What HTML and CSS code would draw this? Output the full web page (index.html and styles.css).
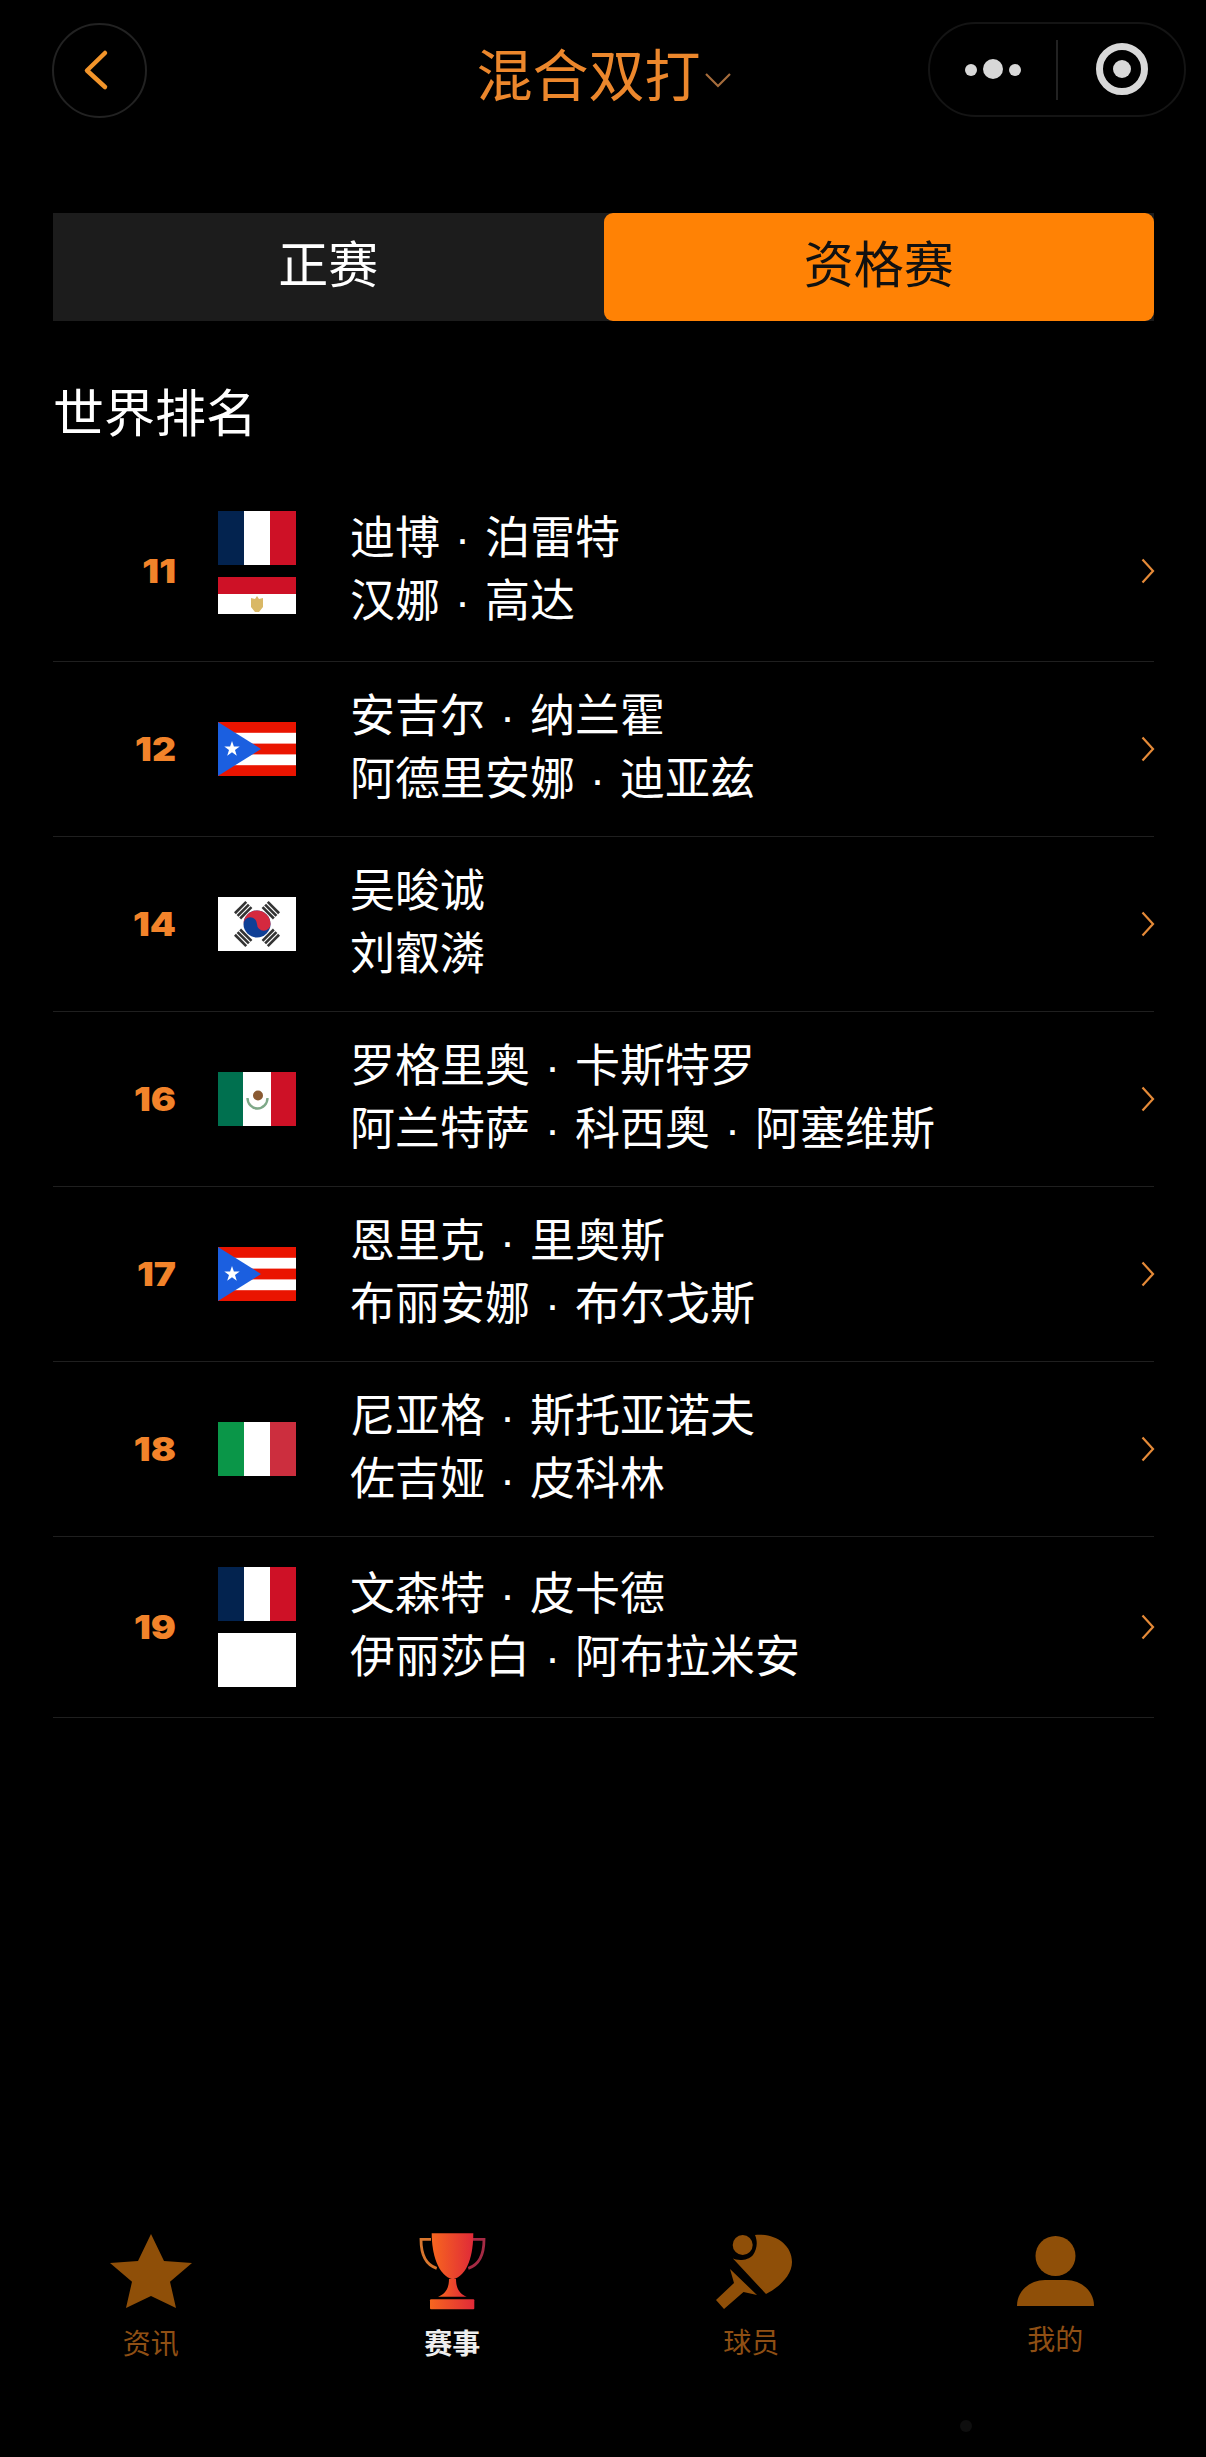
FILE: index.html
```html
<!DOCTYPE html>
<html lang="zh-CN">
<head>
<meta charset="utf-8">
<title>混合双打</title>
<link rel="stylesheet" href="styles.css">
</head>
<body>
<svg class="defs" width="0" height="0" aria-hidden="true">
  <defs>
    <symbol id="fr" viewBox="0 0 78 54"><rect width="78" height="54" fill="#fff"/><rect width="26" height="54" fill="#03234f"/><rect x="52" width="26" height="54" fill="#ce1126"/></symbol>
    <symbol id="eg" viewBox="0 0 78 54"><rect width="78" height="18" fill="#ce1126"/><rect y="17" width="78" height="20" fill="#fff"/><path d="M39 19l2 3 4-1 0 9-4 5h-4l-4-5 0-9 4 1z" fill="#d9b866"/></symbol>
    <symbol id="pr" viewBox="0 0 78 54"><rect width="78" height="54" fill="#ea1400"/><rect y="10.8" width="78" height="10.8" fill="#fff"/><rect y="32.4" width="78" height="10.8" fill="#fff"/><path d="M0 0L43 27L0 54Z" fill="#1b5fe0"/><path d="M14 19l1.9 5.6h5.8l-4.7 3.5 1.8 5.7-4.8-3.5-4.8 3.5 1.8-5.7-4.7-3.5h5.8z" fill="#fff"/></symbol>
    <symbol id="kr" viewBox="0 0 78 54">
      <rect width="78" height="54" fill="#fff"/>
      <circle cx="39" cy="27" r="13.5" fill="#0f3f96"/>
      <path d="M25.5 27a13.5 13.5 0 0 1 27 0a6.75 6.75 0 0 1-13.5 0a6.75 6.75 0 0 0-13.5 0z" fill="#d5293f"/>
      <g fill="#333"><g transform="rotate(-45 39 27)"><rect x="31" y="2.5" width="16" height="2.6"/><rect x="31" y="6.2" width="16" height="2.6"/><rect x="31" y="9.9" width="16" height="2.6"/></g>
      <g transform="rotate(45 39 27)"><rect x="31" y="2.5" width="16" height="2.6"/><rect x="31" y="6.2" width="16" height="2.6"/><rect x="31" y="9.9" width="16" height="2.6"/></g>
      <g transform="rotate(225 39 27)"><rect x="31" y="2.5" width="16" height="2.6"/><rect x="31" y="6.2" width="16" height="2.6"/><rect x="31" y="9.9" width="16" height="2.6"/></g>
      <g transform="rotate(135 39 27)"><rect x="31" y="2.5" width="16" height="2.6"/><rect x="31" y="6.2" width="16" height="2.6"/><rect x="31" y="9.9" width="16" height="2.6"/></g></g>
    </symbol>
    <symbol id="mx" viewBox="0 0 78 54"><rect width="78" height="54" fill="#fff"/><rect width="25" height="54" fill="#00704f"/><rect x="53" width="25" height="54" fill="#ce1126"/><path d="M29.500 26a10 10.500 0 0 0 20 0" fill="none" stroke="#7ea888" stroke-width="2.400"/><circle cx="40" cy="23.500" r="5" fill="#8a5a32"/></symbol>
    <symbol id="it" viewBox="0 0 78 54"><rect width="78" height="54" fill="#fff"/><rect width="26" height="54" fill="#0a9648"/><rect x="52" width="26" height="54" fill="#cc2e3e"/></symbol>
    <symbol id="blank" viewBox="0 0 78 54"><rect width="78" height="54" fill="#fff"/></symbol>
    <symbol id="go" viewBox="0 0 14 26"><path d="M1.500 1.500L12 13L1.500 24.500" fill="none" stroke="#e58a38" stroke-width="2.200"/></symbol>
    <linearGradient id="cup" x1="0" x2="1" y1="0" y2="0"><stop offset="0" stop-color="#f7661f"/><stop offset="1" stop-color="#e02a38"/></linearGradient>
  </defs>
</svg>

<div class="page">
  <header class="topbar">
    <div class="back">
      <svg viewBox="0 0 91 91" width="91" height="91"><path d="M51 28L33 45.500L51 62" fill="none" stroke="#f2942a" stroke-width="4.500" stroke-linecap="round" stroke-linejoin="round"/></svg>
    </div>
    <div class="heading">
      <span class="heading-text">混合双打</span>
      <svg class="heading-caret" viewBox="0 0 28 16" width="28" height="16"><path d="M2 2L14 14L26 2" fill="none" stroke="#a56c3c" stroke-width="2.200"/></svg>
    </div>
    <div class="capsule">
      <svg viewBox="0 0 254 91" width="254" height="91"><g fill="#d8d8d8"><circle cx="41" cy="46" r="6"/><circle cx="63" cy="45" r="10"/><circle cx="85" cy="46" r="6"/><circle cx="192" cy="45" r="9"/></g><path d="M127 16V76" stroke="#222" stroke-width="2"/><circle cx="192" cy="45" r="22.500" fill="none" stroke="#d8d8d8" stroke-width="7"/></svg>
    </div>
  </header>

  <nav class="tabs">
    <div class="tab">正赛</div>
    <div class="tab tab-on">资格赛</div>
  </nav>

  <h1 class="section">世界排名</h1>

  <ul class="list">
    <li class="row">
      <span class="rank">11</span>
      <span class="flags flags-two"><svg class="flag"><use href="#fr"/></svg><svg class="flag"><use href="#eg"/></svg></span>
      <span class="names"><span class="name">迪博<i class="sep">·</i>泊雷特</span><span class="name">汉娜<i class="sep">·</i>高达</span></span>
      <svg class="go"><use href="#go"/></svg>
    </li>
    <li class="row">
      <span class="rank">12</span>
      <span class="flags"><svg class="flag"><use href="#pr"/></svg></span>
      <span class="names"><span class="name">安吉尔<i class="sep">·</i>纳兰霍</span><span class="name">阿德里安娜<i class="sep">·</i>迪亚兹</span></span>
      <svg class="go"><use href="#go"/></svg>
    </li>
    <li class="row">
      <span class="rank">14</span>
      <span class="flags"><svg class="flag"><use href="#kr"/></svg></span>
      <span class="names"><span class="name">吴晙诚</span><span class="name">刘叡潾</span></span>
      <svg class="go"><use href="#go"/></svg>
    </li>
    <li class="row">
      <span class="rank">16</span>
      <span class="flags"><svg class="flag"><use href="#mx"/></svg></span>
      <span class="names"><span class="name">罗格里奥<i class="sep">·</i>卡斯特罗</span><span class="name">阿兰特萨<i class="sep">·</i>科西奥<i class="sep">·</i>阿塞维斯</span></span>
      <svg class="go"><use href="#go"/></svg>
    </li>
    <li class="row">
      <span class="rank">17</span>
      <span class="flags"><svg class="flag"><use href="#pr"/></svg></span>
      <span class="names"><span class="name">恩里克<i class="sep">·</i>里奥斯</span><span class="name">布丽安娜<i class="sep">·</i>布尔戈斯</span></span>
      <svg class="go"><use href="#go"/></svg>
    </li>
    <li class="row">
      <span class="rank">18</span>
      <span class="flags"><svg class="flag"><use href="#it"/></svg></span>
      <span class="names"><span class="name">尼亚格<i class="sep">·</i>斯托亚诺夫</span><span class="name">佐吉娅<i class="sep">·</i>皮科林</span></span>
      <svg class="go"><use href="#go"/></svg>
    </li>
    <li class="row">
      <span class="rank">19</span>
      <span class="flags flags-two"><svg class="flag"><use href="#fr"/></svg><svg class="flag"><use href="#blank"/></svg></span>
      <span class="names"><span class="name">文森特<i class="sep">·</i>皮卡德</span><span class="name">伊丽莎白<i class="sep">·</i>阿布拉米安</span></span>
      <svg class="go"><use href="#go"/></svg>
    </li>
  </ul>

  <footer class="bottom">
    <div class="item">
      <svg class="icon" viewBox="0 -2 100 86"><path d="M50 0L63 27L91 29L69 47.700L75 74L50 62L25 74L31 47.700L9 29L37 27Z" fill="#8f4f08"/></svg>
      <span class="label">资讯</span>
    </div>
    <div class="item">
      <svg class="icon" viewBox="0 -2 100 86">
        <path d="M29 5.300H19C19 20 24 31 34.700 34.300" fill="none" stroke="#d9762e" stroke-width="2.800"/>
        <path d="M71 5.300H82C82 20 77 31 66.300 34.300" fill="none" stroke="#a52a44" stroke-width="2.800"/>
        <path d="M29.700-.7H71.300C71.300 20 66 42 50.700 45.300C36 42 29.700 20 29.700-.7Z" fill="url(#cup)"/>
        <path d="M47 45H54C54 55 58 60 64.700 62.700H36C43 60 47 55 47 45Z" fill="url(#cup)"/>
        <rect x="28" y="65.300" width="44.300" height="10" rx="1" fill="url(#cup)"/>
      </svg>
      <span class="label label-on">赛事</span>
    </div>
    <div class="item">
      <svg class="icon" viewBox="0 -2 100 86"><g fill="#8f4f08"><circle cx="38.700" cy="11" r="10"/><path d="M51 1C70-1 88 10 88 28C88 42 74 54 62 60L28.700 24.300C33 27 44 27 49 21C53 15 54 8 51 1Z"/><path d="M26 35L53 61L39.500 58L20 75L12 66L30 49Z"/></g></svg>
      <span class="label label-player">球员</span>
    </div>
    <div class="item">
      <svg class="icon" viewBox="0 -2 100 86"><g fill="#8f4f08"><circle cx="50.500" cy="22" r="20"/><path d="M12 72C12 56 26 46 40 46H61C75 46 89 56 89 72Z"/></g></svg>
      <span class="label label-me">我的</span>
    </div>
  </footer>
</div>
</body>
</html>
```

FILE: styles.css
```css
* {
  box-sizing: border-box;
}

html,
body {
  margin: 0;
  padding: 0;
  background: #000;
}

body {
  font-family: "Noto Sans CJK SC", "Noto Sans", sans-serif;
  color: #fff;
}

.defs {
  display: block;
  height: 0;
}

.page {
  height: 2457px;
  display: flex;
  flex-direction: column;
  overflow: hidden;
}

.topbar {
  display: grid;
  grid-template-columns: 1fr auto 1fr;
  align-items: start;
  padding: 22px 20px 0 21px;
}

.back {
  width: 95px;
  height: 95px;
  margin-top: 1px;
  margin-left: 31px;
  border: 2px solid #222;
  border-radius: 50%;
}

.back svg,
.capsule svg {
  display: block;
}

.heading {
  display: flex;
  align-items: center;
  margin-top: 22px;
  margin-left: 1px;
  color: #ec872c;
}

.heading-text {
  font-size: 56px;
  line-height: 56px;
  white-space: nowrap;
}

.heading-caret {
  margin-left: 3px;
  margin-top: 16px;
}

.capsule {
  justify-self: end;
  width: 258px;
  height: 95px;
  border: 2px solid #141414;
  border-radius: 48px;
}

.tabs {
  display: flex;
  height: 108px;
  margin: 95px 52px 0 53px;
  background: #1c1c1c;
}

.tab {
  flex: 1;
  display: flex;
  align-items: center;
  justify-content: center;
  padding-bottom: 12px;
  font-size: 50px;
  line-height: 1;
  color: #fff;
}

.tab-on {
  background: #ff8205;
  color: #111;
  border-radius: 9px;
}

.section {
  margin: 54px 52px 3px 53px;
  font-size: 51px;
  line-height: 70px;
  font-weight: 400;
}

.list {
  list-style: none;
  margin: 33px 52px 0 53px;
  padding: 0;
}

.row {
  display: flex;
  align-items: center;
  padding: 24px 0;
  border-bottom: 1px solid #1f1f1f;
}

.rank {
  width: 123px;
  margin-right: 42px;
  flex: none;
  text-align: right;
  font-family: Inter, "Liberation Sans", sans-serif;
  font-weight: 900;
  font-size: 33px;
  line-height: 1;
  color: #f2832a;
  transform: scaleX(1.13);
  transform-origin: right center;
}

.flags {
  display: flex;
  flex-direction: column;
  gap: 12px;
  width: 78px;
  flex: none;
  margin-right: 54px;
}

.flags-two {
  margin-top: 6px;
  margin-bottom: 6px;
}

.flag {
  display: block;
  width: 78px;
  height: 54px;
}

.names {
  display: flex;
  flex-direction: column;
  flex: 1;
  margin-top: -5px;
  margin-bottom: 5px;
  font-size: 45px;
  line-height: 63px;
}

.name {
  display: block;
  height: 63px;
  white-space: nowrap;
}

.sep {
  display: inline-block;
  width: 45px;
  text-align: center;
  font-family: "Liberation Sans", sans-serif;
  font-style: normal;
  line-height: 1;
}

.go {
  width: 14px;
  height: 26px;
  flex: none;
  margin-right: -1px;
}

.bottom {
  position: relative;
  margin-top: auto;
  display: grid;
  grid-template-columns: repeat(4, 1fr);
  padding-bottom: 95px;
}

.bottom::after {
  content: "";
  position: absolute;
  left: 960px;
  bottom: 25px;
  width: 12px;
  height: 12px;
  border-radius: 50%;
  background: #0e0e0e;
}

.item {
  display: flex;
  flex-direction: column;
  align-items: center;
}

.icon {
  display: block;
  width: 100px;
  height: 86px;
}

.label {
  margin-top: 4px;
  font-size: 28px;
  line-height: 40px;
  color: #8f4f14;
}

.label-on {
  color: #eee;
  font-weight: 700;
}

.label-player {
  margin-top: 3px;
  margin-right: 5px;
}

.label-me {
  margin-top: 0;
}
```
